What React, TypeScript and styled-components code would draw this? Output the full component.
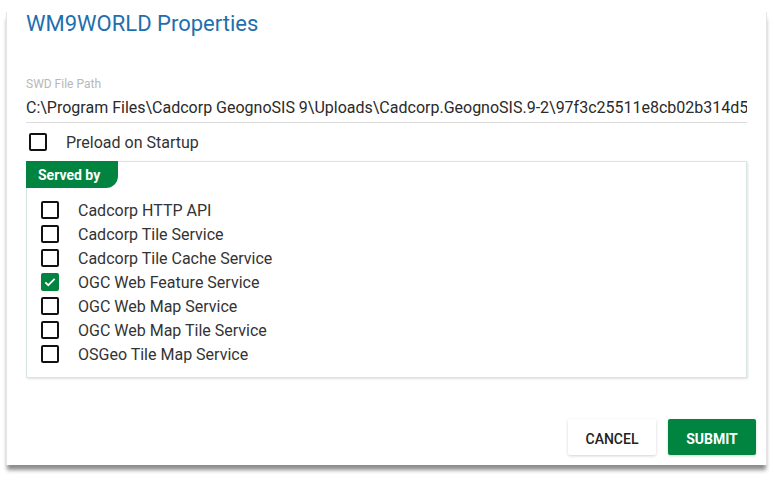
import React from "react";
import styled, { createGlobalStyle } from "styled-components";

const Global = createGlobalStyle`
  html, body { margin: 0; padding: 0; background: #ffffff; }
  body { font-family: Roboto, "Liberation Sans", Arial, sans-serif; }
  * { box-sizing: border-box; }
`;

const GREEN = "#00843f";

const Page = styled.div`
  min-height: 480px;
  padding-top: 12px;
  padding-left: 6px;
`;

const Card = styled.div`
  width: 761px;
  height: 453px;
  background: #fff;
  border-left: 1px solid #e4e4e4;
  border-right: 1px solid #e4e4e4;
  box-shadow: 0 6px 4px -1px rgba(0, 0, 0, 0.45);
  display: flex;
  flex-direction: column;
`;

const Body = styled.div`
  padding: 0 19px 0 19px;
  display: flex;
  flex-direction: column;
  flex: 1;
`;

const Title = styled.h2`
  margin: 0;
  font-size: 22px;
  line-height: 24px;
  font-weight: 400;
  color: #1f6fad;
`;

const Field = styled.div`
  margin-top: 42px;
  display: flex;
  flex-direction: column;
`;

const FieldLabel = styled.label`
  font-size: 12px;
  line-height: 13px;
  color: #b8b8b8;
`;

const FieldValue = styled.div`
  margin-top: 7px;
  font-size: 16px;
  line-height: 20px;
  color: #2a2a2a;
  white-space: nowrap;
  overflow: hidden;
  padding-bottom: 4px;
  border-bottom: 1px solid #dcdcdc;
`;

const CheckRow = styled.label<{ $indent: number; $gap: number; $height: number }>`
  display: flex;
  align-items: center;
  height: ${(p) => p.$height}px;
  padding-left: ${(p) => p.$indent}px;
  gap: ${(p) => p.$gap}px;
  font-size: 16px;
  color: #333;
`;

const Box = styled.span<{ $checked?: boolean }>`
  width: 18px;
  height: 18px;
  flex: none;
  border-radius: 2px;
  border: ${(p) => (p.$checked ? "none" : "2px solid #111")};
  background: ${(p) => (p.$checked ? GREEN : "transparent")};
  display: flex;
  align-items: center;
  justify-content: center;
`;

const Fieldset = styled.div`
  border: 1px solid #d6e6e2;
  box-shadow: 1px 1px 2px rgba(0, 0, 0, 0.12);
  display: flex;
  flex-direction: column;
  padding-bottom: 11px;
`;

const Tab = styled.div`
  align-self: flex-start;
  margin: -1px 0 0 -1px;
  width: 92px;
  height: 27px;
  background: ${GREEN};
  color: #fff;
  font-size: 14px;
  font-weight: 700;
  padding-left: 12px;
  display: flex;
  align-items: center;
  border-radius: 0 0 12px 0;
`;

const List = styled.div`
  padding-top: 10px;
  display: flex;
  flex-direction: column;
`;

const Actions = styled.div`
  display: flex;
  justify-content: flex-end;
  gap: 12px;
  padding: 0 10px 10px 0;
`;

const Button = styled.button<{ $primary?: boolean }>`
  width: 88px;
  height: 36px;
  padding: 3px 0 0;
  border: none;
  border-radius: 2px;
  font-family: Roboto, "Liberation Sans", Arial, sans-serif;
  font-size: 14px;
  font-weight: ${(p) => (p.$primary ? 700 : 500)};
  color: ${(p) => (p.$primary ? "#fff" : "#222")};
  background: ${(p) => (p.$primary ? GREEN : "#fff")};
  box-shadow: 0 1px 3px rgba(0, 0, 0, 0.18);
  text-transform: uppercase;
`;

const Check = () => (
  <svg width="14" height="14" viewBox="0 0 24 24">
    <path d="M4 12.5l5 5L20 6.5" fill="none" stroke="#fff" strokeWidth="3" />
  </svg>
);

const services = [
  { name: "Cadcorp HTTP API", checked: false },
  { name: "Cadcorp Tile Service", checked: false },
  { name: "Cadcorp Tile Cache Service", checked: false },
  { name: "OGC Web Feature Service", checked: true },
  { name: "OGC Web Map Service", checked: false },
  { name: "OGC Web Map Tile Service", checked: false },
  { name: "OSGeo Tile Map Service", checked: false },
];

export default function App() {
  return (
    <>
      <Global />
      <Page>
        <Card>
          <Body>
            <Title>WM9WORLD Properties</Title>
            <Field>
              <FieldLabel>SWD File Path</FieldLabel>
              <FieldValue>
                C:\Program Files\Cadcorp GeognoSIS 9\Uploads\Cadcorp.GeognoSIS.9-2\97f3c25511e8cb02b314d5
              </FieldValue>
            </Field>
            <CheckRow $indent={3} $gap={19} $height={38}>
              <Box />
              Preload on Startup
            </CheckRow>
            <Fieldset>
              <Tab>Served by</Tab>
              <List>
                {services.map((s) => (
                  <CheckRow key={s.name} $indent={14} $gap={19} $height={24}>
                    <Box $checked={s.checked}>{s.checked && <Check />}</Box>
                    {s.name}
                  </CheckRow>
                ))}
              </List>
            </Fieldset>
          </Body>
          <Actions>
            <Button>Cancel</Button>
            <Button $primary>Submit</Button>
          </Actions>
        </Card>
      </Page>
    </>
  );
}
